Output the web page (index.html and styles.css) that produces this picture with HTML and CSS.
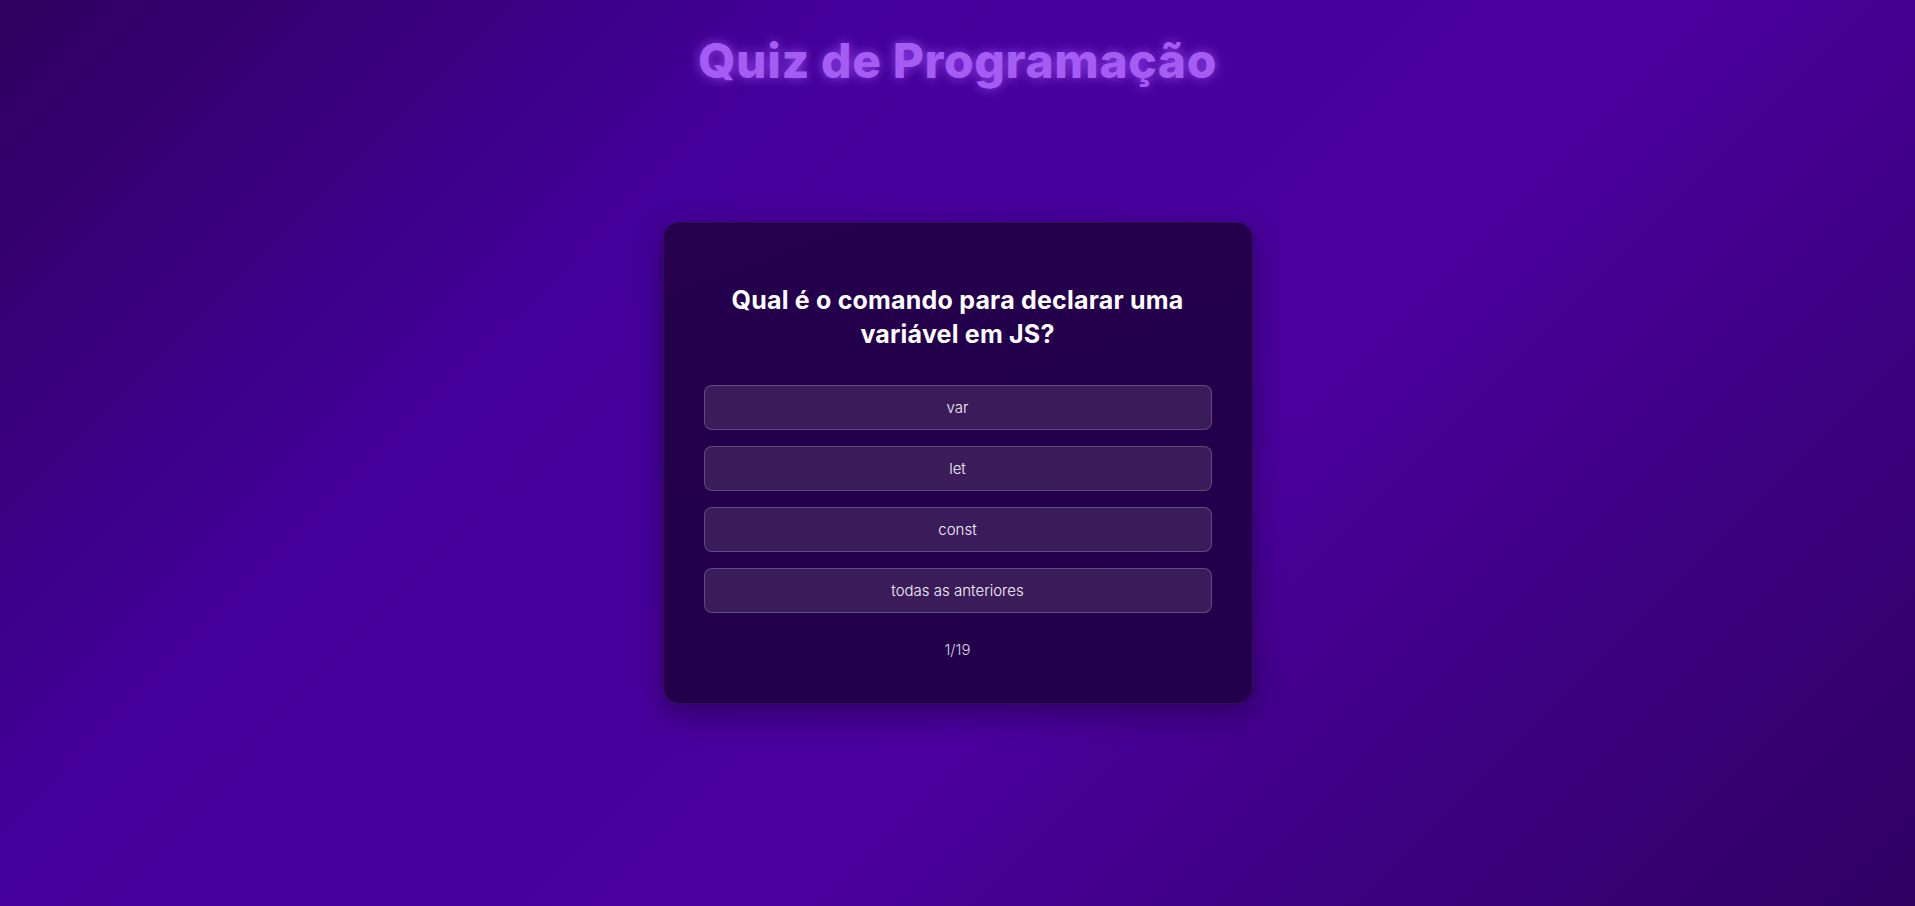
FILE: index.html
```html
<!DOCTYPE html>
<html lang="pt">
<head>
<meta charset="utf-8">
<title>Quiz de Programação</title>
<link rel="stylesheet" href="styles.css">
</head>
<body>
<h1 class="title">Quiz de Programação</h1>
<main class="card">
  <h2 class="question">Qual é o comando para declarar uma variável em JS?</h2>
  <div class="options">
    <button class="option">var</button>
    <button class="option">let</button>
    <button class="option">const</button>
    <button class="option">todas as anteriores</button>
  </div>
  <p class="counter">1/19</p>
</main>
</body>
</html>
```

FILE: styles.css
```css
* { box-sizing: border-box; }
html, body { height: 100%; }
body {
  margin: 0;
  min-height: 100vh;
  background: linear-gradient(135deg, #2e005e 0%, #44009a 30%, #4a009d 60%, #2f0062 100%);
  font-family: "Inter", "Liberation Sans", sans-serif;
  color: #fff;
  display: flex;
  flex-direction: column;
  align-items: center;
}
.title {
  margin: 30px 0 0;
  font-family: "Inter", "Liberation Sans", sans-serif;
  font-weight: 800;
  font-size: 48px;
  line-height: 62px;
  color: #a45cf2;
  text-shadow: 0 0 12px rgba(170, 90, 255, 0.75);
  letter-spacing: 0.6px;
}
.card {
  margin-top: 130px;
  width: 590px;
  padding: 60px 40px 43px;
  background: linear-gradient(160deg, #24004d 0%, #23004a 100%);
  border: 1px solid rgba(255, 255, 255, 0.06);
  border-radius: 16px;
  box-shadow: 0 10px 30px rgba(0, 0, 0, 0.35);
  display: flex;
  flex-direction: column;
  align-items: center;
}
.question {
  margin: 0 0 34px;
  font-family: "Inter", "Liberation Sans", sans-serif;
  font-weight: 700;
  font-size: 25px;
  line-height: 34px;
  letter-spacing: 0.2px;
  text-align: center;
  color: #fff;
  padding: 0;
}
.options {
  width: 100%;
  display: flex;
  flex-direction: column;
  gap: 16px;
}
.option {
  height: 45px;
  width: 100%;
  background: #3a1c5b;
  border: 1px solid rgba(255, 255, 255, 0.2);
  border-radius: 8px;
  color: #f6f2fa;
  font-family: "Inter", "Liberation Sans", sans-serif;
  font-size: 15px;
  font-weight: 300;
}
.counter {
  margin: 27px 0 0;
  font-size: 15px;
  font-weight: 300;
  line-height: 20px;
  color: #d8d0e2;
}
```
